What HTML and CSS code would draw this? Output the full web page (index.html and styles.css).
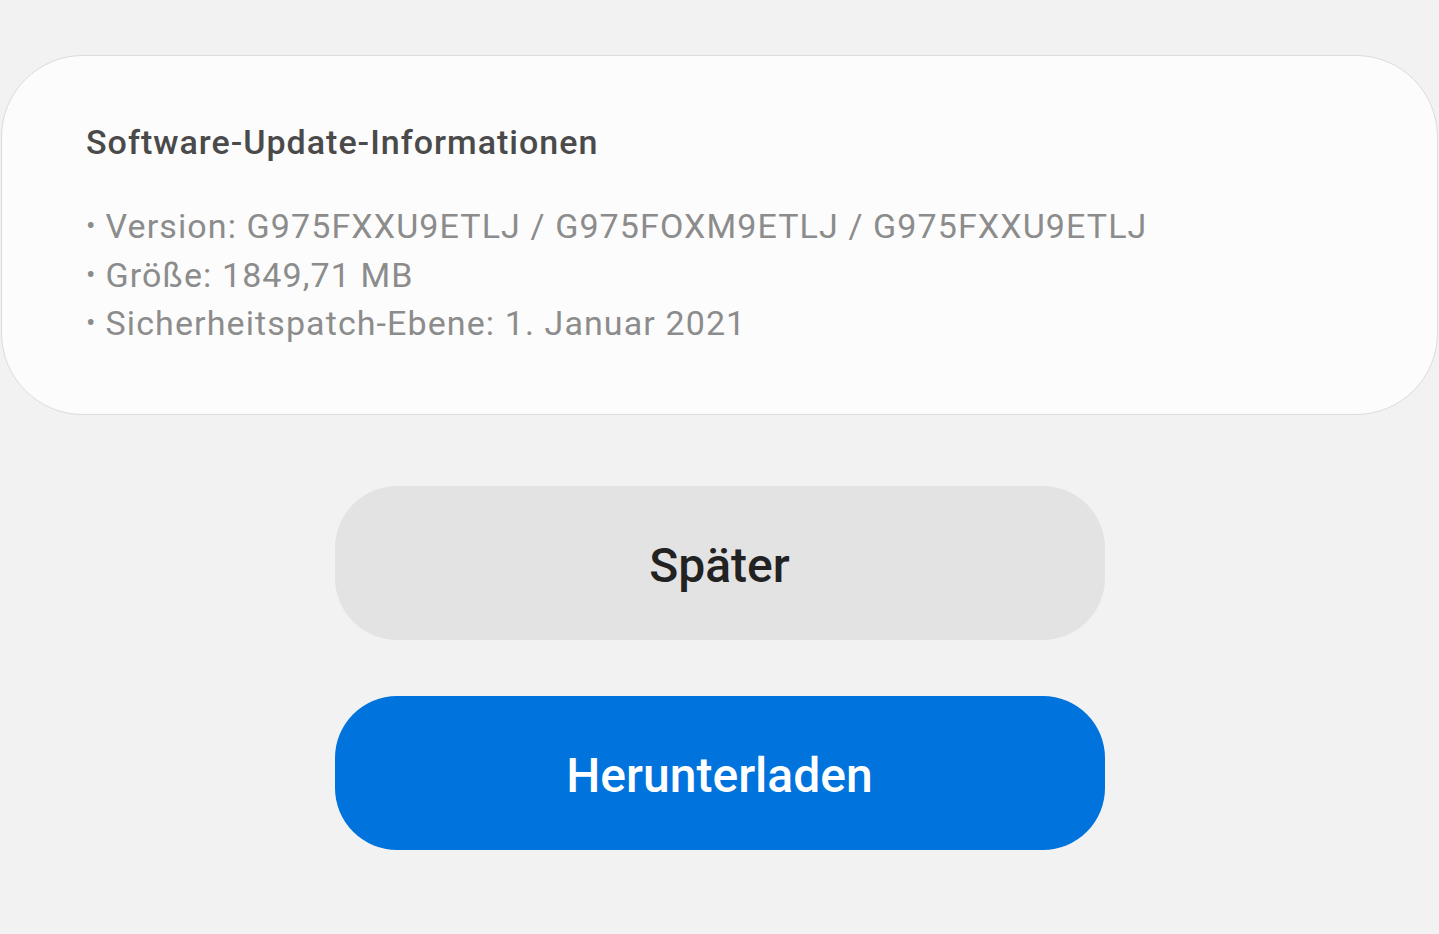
FILE: index.html
```html
<!doctype html>
<html lang="de">
<head>
    <meta charset="utf-8">
    <title>Software-Update</title>
    <link rel="stylesheet" href="styles.css">
</head>
<body>
    <div class="card">
        <p class="title">Software-Update-Informationen</p>
        <ul class="info">
            <li>Version: G975FXXU9ETLJ / G975FOXM9ETLJ / G975FXXU9ETLJ</li>
            <li>Größe: 1849,71 MB</li>
            <li>Sicherheitspatch-Ebene: 1. Januar 2021</li>
        </ul>
    </div>

    <div class="actions">
        <button class="btn btn-later">Später</button>
        <button class="btn btn-download">Herunterladen</button>
    </div>
</body>
</html>
```

FILE: styles.css
```css
body {
    margin: 0;
    background: #f2f2f2;
    font-family: Roboto, "Noto Sans", sans-serif;
}
.card {
    margin: 55px 1px 0 1px;
    height: 360px;
    box-sizing: border-box;
    background: #fcfcfc;
    border: 1px solid #dcdcdc;
    border-radius: 82px;
    padding: 66px 84px 0 84px;
}
.title {
    margin: 0;
    font-size: 34px;
    font-weight: 500;
    letter-spacing: 1px;
    color: #4a4a4a;
    line-height: 40px;
}
.info {
    list-style: none;
    margin: 40px 0 0 0;
    padding: 0;
    font-size: 34px;
    letter-spacing: 1.1px;
    line-height: 48.5px;
    color: #8c8c8c;
}
.info li::before {
    content: "\2022";
    font-size: 28px;
    line-height: 0;
    margin-right: 9px;
    position: relative;
    top: -3px;
}
.actions {
    display: flex;
    flex-direction: column;
    align-items: center;
    gap: 56px;
    margin-top: 71px;
}
.btn {
    width: 770px;
    height: 154px;
    padding-top: 6px;
    border: none;
    border-radius: 62px;
    font-family: Roboto, "Noto Sans", sans-serif;
    font-size: 48px;
    font-weight: 500;
}
.btn-later {
    background: #e3e3e3;
    color: #222;
}
.btn-download {
    background: #0073dd;
    color: #fff;
}
```
